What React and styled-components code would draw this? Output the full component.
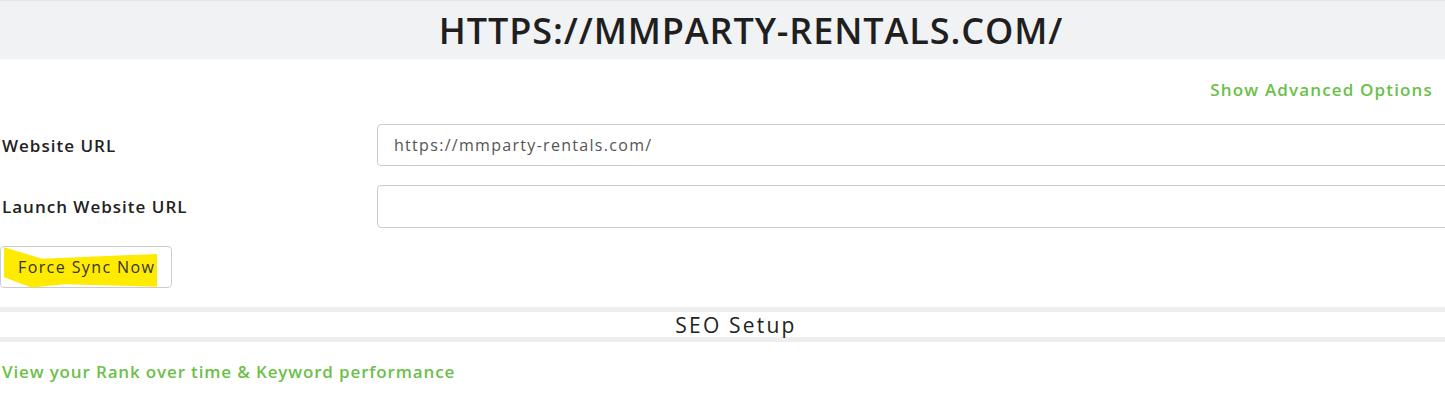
import styled, { createGlobalStyle } from "styled-components";

const GlobalStyle = createGlobalStyle`
  body {
    margin: 0;
    background: #fff;
    overflow: hidden;
    font-family: "Open Sans", "DejaVu Sans", sans-serif;
  }
`;

const Page = styled.div`
  width: 1472px;
`;

const Header = styled.header`
  height: 59px;
  background: #f1f2f4;
  border-top: 1px solid #e4e5e7;
  box-sizing: border-box;
  display: flex;
  align-items: center;
  justify-content: center;
  padding-left: 30px;
`;

const Title = styled.h1`
  margin: 0;
  font-size: 36px;
  font-weight: 600;
  color: #1f1f1f;
  letter-spacing: 0.9px;
`;

const AdvancedRow = styled.div`
  height: 65px;
  box-sizing: border-box;
  padding: 0 39px 4px 0;
  display: flex;
  align-items: center;
  justify-content: flex-end;
`;

const GreenLink = styled.a`
  color: #6cc04a;
  font-size: 17px;
  font-weight: 600;
  letter-spacing: ${(p) => p.$ls}px;
  text-decoration: none;
  cursor: pointer;
`;

const Form = styled.div`
  display: flex;
  flex-direction: column;
  gap: 19px;
`;

const FieldRow = styled.div`
  display: grid;
  grid-template-columns: 377px 1fr;
  align-items: center;
`;

const Label = styled.label`
  padding-left: 2px;
  font-size: 17px;
  font-weight: 600;
  letter-spacing: 1px;
  color: #222;
`;

const Input = styled.input`
  height: ${(p) => p.$h}px;
  box-sizing: border-box;
  border: 1px solid #cccccc;
  border-radius: 4px;
  padding: 0 16px;
  font-family: "Open Sans", "DejaVu Sans", sans-serif;
  font-size: 16px;
  letter-spacing: 1.3px;
  color: #555;
  outline: none;
`;

const ButtonRow = styled.div`
  padding-top: 18px;
  padding-bottom: 19px;
`;

const SyncButton = styled.button`
  width: 172px;
  height: 42px;
  background: #fff;
  border: 1px solid #cccccc;
  border-radius: 4px;
  padding: 0;
  display: flex;
  align-items: center;
  font-family: "Open Sans", "DejaVu Sans", sans-serif;
  font-size: 16px;
  letter-spacing: 1.4px;
  color: #333;
  cursor: pointer;
`;

const Highlight = styled.span`
  margin-left: 3px;
  padding: 9px 0 10px 14px;
  width: 139px;
  text-align: left;
  background: #ffeb00;
  clip-path: polygon(0 2%, 25% 30%, 100% 18%, 100% 98%, 40% 92%, 18% 100%, 0 75%);
`;

const SectionBar = styled.div`
  border-top: 5px solid #eeeeee;
  border-bottom: 5px solid #eeeeee;
  height: 25px;
  display: flex;
  align-items: center;
  justify-content: center;
  font-size: 21px;
  letter-spacing: 2.2px;
  color: #222;
`;

const Footer = styled.div`
  padding: 18px 0 0 2px;
`;

export default function App() {
  return (
    <Page>
      <GlobalStyle />
      <Header>
        <Title>HTTPS://MMPARTY-RENTALS.COM/</Title>
      </Header>
      <AdvancedRow>
        <GreenLink $ls={1.15}>Show Advanced Options</GreenLink>
      </AdvancedRow>
      <Form>
        <FieldRow>
          <Label>Website URL</Label>
          <Input $h={42} defaultValue="https://mmparty-rentals.com/" />
        </FieldRow>
        <FieldRow>
          <Label>Launch Website URL</Label>
          <Input $h={43} />
        </FieldRow>
      </Form>
      <ButtonRow>
        <SyncButton>
          <Highlight>Force Sync Now</Highlight>
        </SyncButton>
      </ButtonRow>
      <SectionBar>SEO Setup</SectionBar>
      <Footer>
        <GreenLink $ls={0.85}>View your Rank over time &amp; Keyword performance</GreenLink>
      </Footer>
    </Page>
  );
}
